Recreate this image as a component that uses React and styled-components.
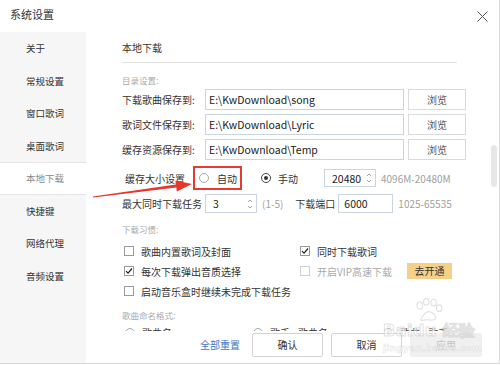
import React from "react";
import styled, { createGlobalStyle } from "styled-components";

const Global = createGlobalStyle`
  html, body { margin: 0; padding: 0; background: #fff; }
  body { font-family: "Noto Sans CJK SC", "Microsoft YaHei", sans-serif; color: #333; }
  * { box-sizing: border-box; }
`;

const Window = styled.div`
  position: relative;
  width: 500px;
  height: 364px;
  background: #fff;
  border-right: 1px solid #d8d8d8;
  border-bottom: 1px solid #d8d8d8;
  display: flex;
  flex-direction: column;
  overflow: hidden;
`;

const TitleBar = styled.div`
  height: 32px;
  display: flex;
  align-items: flex-start;
  justify-content: space-between;
  padding: 5px 11px 0 10px;
`;

const Title = styled.div`
  font-size: 11px;
  line-height: 18px;
  color: #333;
`;

const CloseBtn = styled.svg`
  width: 11px;
  height: 11px;
  margin-top: 6px;
`;

const Body = styled.div`
  flex: 1;
  display: flex;
  min-height: 0;
`;

const Sidebar = styled.div`
  width: 86px;
  background: #f6f6f6;
  display: flex;
  flex-direction: column;
`;

const NavItem = styled.div`
  height: 32.5px;
  padding-left: 26px;
  font-size: 9.5px;
  line-height: 30.5px;
  color: ${(p) => (p.$active ? "#8a8a8a" : "#333")};
  background: ${(p) => (p.$active ? "#fff" : "transparent")};
  border-top: 1px solid ${(p) => (p.$active ? "#e4e4e4" : "transparent")};
  border-bottom: 1px solid ${(p) => (p.$active ? "#e4e4e4" : "transparent")};
`;

const Main = styled.div`
  flex: 1;
  display: flex;
  flex-direction: column;
  min-width: 0;
`;

const ScrollRow = styled.div`
  height: 299px;
  display: flex;
  overflow: hidden;
`;

const Content = styled.div`
  flex: 1;
  min-width: 0;
  padding-left: 36px;
  display: flex;
  flex-direction: column;
`;

const ScrollTrack = styled.div`
  width: 8px;
  padding-top: 113px;
`;

const Thumb = styled.div`
  width: 6px;
  height: 42px;
  border-radius: 3px;
  background: #e7e7e7;
`;

const Heading = styled.div`
  width: 335px;
  height: 31px;
  padding-top: 2px;
  line-height: 28px;
  font-size: 10px;
  color: #333;
  border-bottom: 1px solid #e3e3e3;
`;

const SectionLabel = styled.div`
  margin-top: ${(p) => p.$mt}px;
  height: 16px;
  line-height: 16px;
  font-size: 8.5px;
  color: #aaa;
`;

const PathList = styled.div`
  margin-top: 1px;
  display: flex;
  flex-direction: column;
  gap: 4px;
`;

const Row = styled.div`
  display: flex;
  align-items: center;
  height: ${(p) => p.$h || 21}px;
  margin-top: ${(p) => p.$mt || 0}px;
`;

const Label = styled.div`
  width: ${(p) => p.$w}px;
  margin-left: ${(p) => p.$ml || 0}px;
  font-size: 10px;
  color: #333;
  white-space: nowrap;
  flex-shrink: 0;
`;

const PathInput = styled.div`
  width: 199px;
  height: 21px;
  border: 1px solid #c9d5e0;
  padding-left: 3px;
  font-size: 10.5px;
  line-height: 19px;
  color: #222;
`;

const BrowseButton = styled.div`
  width: 58px;
  height: 21px;
  margin-left: 4px;
  border: 1px solid #dadada;
  text-align: center;
  font-size: 10px;
  line-height: 19px;
  color: #555;
`;

const RedBox = styled.div`
  width: 49px;
  height: 24px;
  border: 2px solid #e53a33;
  display: flex;
  align-items: center;
  padding-left: 4px;
`;

const Radio = styled.span`
  width: 10px;
  height: 10px;
  border-radius: 50%;
  border: 1px solid ${(p) => (p.$on ? "#444" : "#a8a8a8")};
  display: inline-flex;
  align-items: center;
  justify-content: center;
  flex-shrink: 0;
  &::after {
    content: "";
    width: 4px;
    height: 4px;
    border-radius: 50%;
    background: ${(p) => (p.$on ? "#333" : "transparent")};
  }
`;

const OptText = styled.span`
  font-size: 10px;
  color: #333;
  margin-left: ${(p) => p.$gap || 7}px;
  white-space: nowrap;
`;

const Option = styled.div`
  display: flex;
  align-items: center;
  width: ${(p) => p.$w}px;
  margin-left: ${(p) => p.$ml || 0}px;
  flex-shrink: 0;
`;

const SpinBox = styled.div`
  width: ${(p) => p.$w}px;
  height: ${(p) => p.$h}px;
  border: 1px solid #c9d5e0;
  display: flex;
  align-items: center;
  justify-content: space-between;
  padding: 0 3px 0 ${(p) => p.$pl || 7}px;
  font-size: 10.5px;
  color: #222;
  flex-shrink: 0;
`;

const Hint = styled.span`
  margin-left: ${(p) => p.$ml || 5}px;
  font-size: 10px;
  color: #a0a0a0;
  white-space: nowrap;
`;

const CheckGrid = styled.div`
  margin-top: 4px;
  padding-left: 2px;
  display: grid;
  grid-template-columns: 176px auto;
  grid-auto-rows: 20px;
`;

const CheckItem = styled.div`
  display: flex;
  align-items: center;
  font-size: 10px;
  color: ${(p) => (p.$disabled ? "#aaa" : "#333")};
  white-space: nowrap;
  grid-column: ${(p) => p.$span || "auto"};
`;

const Box = styled.span`
  width: 10px;
  height: 10px;
  border: 1px solid ${(p) => (p.$disabled ? "#cfcfcf" : "#9a9a9a")};
  margin-right: 7px;
  display: inline-flex;
  align-items: center;
  justify-content: center;
  flex-shrink: 0;
`;

const VipButton = styled.div`
  margin-left: 15px;
  width: 45px;
  height: 16px;
  background: #f6d089;
  text-align: center;
  line-height: 16px;
  font-size: 10px;
  color: #333;
`;

const NameRow = styled.div`
  margin-top: 2px;
  display: flex;
  align-items: center;
  height: 20px;
  padding-left: 3px;
`;

const Footer = styled.div`
  height: 32px;
  display: flex;
  justify-content: flex-end;
  align-items: flex-start;
  padding: 2px 17px 0 0;
  gap: 8px;
`;

const ResetLink = styled.div`
  height: 24px;
  line-height: 24px;
  font-size: 10px;
  color: #3a78c8;
  margin-right: 4px;
`;

const FootButton = styled.div`
  width: ${(p) => p.$w || 71}px;
  height: 24px;
  line-height: 22px;
  text-align: center;
  font-size: 10px;
  border: 1px solid ${(p) => (p.$disabled ? "#f0f0f0" : "#d4d4d4")};
  border-radius: 2px;
  background: ${(p) => (p.$disabled ? "#f0f0f0" : "#fff")};
  color: ${(p) => (p.$disabled ? "#c0c0c0" : "#333")};
`;

const ArrowSvg = styled.svg`
  position: absolute;
  left: 0;
  top: 0;
  width: 500px;
  height: 365px;
  pointer-events: none;
`;

const Watermark = styled.div`
  position: absolute;
  left: 383px;
  top: 298px;
  width: 95px;
  pointer-events: none;
  display: flex;
  flex-direction: column;
  align-items: flex-start;
`;

const WmBig = styled.div`
  font-family: "DejaVu Sans", sans-serif;
  font-size: 16px;
  font-weight: bold;
  color: rgba(255, 255, 255, 0.55);
  -webkit-text-stroke: 1px rgba(195, 195, 195, 0.5);
  line-height: 18px;
  letter-spacing: 0.5px;
`;

const WmSmall = styled.div`
  font-family: "DejaVu Sans", sans-serif;
  font-size: 9.5px;
  font-weight: bold;
  color: rgba(255, 255, 255, 0.5);
  -webkit-text-stroke: 0.6px rgba(195, 195, 195, 0.45);
  line-height: 12px;
  margin-top: 2px;
`;

const Check = () => (
  <svg width="8" height="8" viewBox="0 0 8 8">
    <polyline points="1,4.2 3,6.2 7,1.5" fill="none" stroke="#222" strokeWidth="1.2" />
  </svg>
);

const Spin = () => (
  <svg width="6" height="12" viewBox="0 0 6 12">
    <polyline points="1,4 3,2 5,4" fill="none" stroke="#999" strokeWidth="0.9" />
    <polyline points="1,8 3,10 5,8" fill="none" stroke="#999" strokeWidth="0.9" />
  </svg>
);

const navItems = ["关于", "常规设置", "窗口歌词", "桌面歌词", "本地下载", "快捷键", "网络代理", "音频设置"];

const paths = [
  ["下载歌曲保存到:", "E:\\KwDownload\\song"],
  ["歌词文件保存到:", "E:\\KwDownload\\Lyric"],
  ["缓存资源保存到:", "E:\\KwDownload\\Temp"],
];

export default function App() {
  return (
    <>
      <Global />
      <Window>
        <TitleBar>
          <Title>系统设置</Title>
          <CloseBtn viewBox="0 0 11 11">
            <path d="M0.5 0.5 L10.5 10.5 M10.5 0.5 L0.5 10.5" stroke="#555" strokeWidth="1" />
          </CloseBtn>
        </TitleBar>
        <Body>
          <Sidebar>
            {navItems.map((n) => (
              <NavItem key={n} $active={n === "本地下载"}>{n}</NavItem>
            ))}
          </Sidebar>
          <Main>
            <ScrollRow>
              <Content>
                <Heading>本地下载</Heading>
                <SectionLabel $mt={9}>目录设置:</SectionLabel>
                <PathList>
                  {paths.map(([l, v]) => (
                    <Row key={l}>
                      <Label $w={83}>{l}</Label>
                      <PathInput>{v}</PathInput>
                      <BrowseButton>浏览</BrowseButton>
                    </Row>
                  ))}
                </PathList>
                <Row $h={24} $mt={6}>
                  <Label $w={68} $ml={3}>缓存大小设置</Label>
                  <RedBox>
                    <Radio />
                    <OptText $gap={8}>自动</OptText>
                  </RedBox>
                  <Option $w={63} $ml={19}>
                    <Radio $on />
                    <OptText>手动</OptText>
                  </Option>
                  <SpinBox $w={52} $h={18}>
                    <span>20480</span>
                    <Spin />
                  </SpinBox>
                  <Hint>4096M-20480M</Hint>
                </Row>
                <Row $h={20} $mt={4}>
                  <Label $w={83}>最大同时下载任务</Label>
                  <SpinBox $w={52} $h={19}>
                    <span>3</span>
                    <Spin />
                  </SpinBox>
                  <Hint>(1-5)</Hint>
                  <Label $w={43} $ml={12}>下载端口</Label>
                  <SpinBox $w={55} $h={19} $pl={5}>
                    <span>6000</span>
                  </SpinBox>
                  <Hint>1025-65535</Hint>
                </Row>
                <SectionLabel $mt={8}>下载习惯:</SectionLabel>
                <CheckGrid>
                  <CheckItem><Box />歌曲内置歌词及封面</CheckItem>
                  <CheckItem><Box><Check /></Box>同时下载歌词</CheckItem>
                  <CheckItem><Box><Check /></Box>每次下载弹出音质选择</CheckItem>
                  <CheckItem $disabled>
                    <Box $disabled />开启VIP高速下载
                    <VipButton>去开通</VipButton>
                  </CheckItem>
                  <CheckItem $span="1 / span 2"><Box />启动音乐盒时继续未完成下载任务</CheckItem>
                </CheckGrid>
                <SectionLabel $mt={6}>歌曲命名格式:</SectionLabel>
                <NameRow>
                  <Option $w={128}>
                    <Radio />
                    <OptText>歌曲名</OptText>
                  </Option>
                  <Option $w={130}>
                    <Radio />
                    <OptText>歌手 - 歌曲名</OptText>
                  </Option>
                  <Option $w={70}>
                    <Radio />
                    <OptText>歌曲 - 歌手</OptText>
                  </Option>
                </NameRow>
              </Content>
              <ScrollTrack>
                <Thumb />
              </ScrollTrack>
            </ScrollRow>
            <Footer>
              <ResetLink>全部重置</ResetLink>
              <FootButton>确认</FootButton>
              <FootButton>取消</FootButton>
              <FootButton $w={72} $disabled>应用</FootButton>
            </Footer>
          </Main>
        </Body>
        <Watermark>
          <svg width="40" height="24" viewBox="0 0 40 26" style={{ marginLeft: 26 }}>
            <g fill="none" stroke="rgba(195,195,195,0.5)" strokeWidth="1.2">
              <ellipse cx="10" cy="8" rx="3" ry="4" />
              <ellipse cx="17" cy="4" rx="3" ry="3.6" />
              <ellipse cx="25" cy="5" rx="3" ry="3.6" />
              <ellipse cx="31" cy="11" rx="3" ry="3.6" />
              <path d="M12 22 Q18 10 26 18 Q30 24 22 24 Q18 23 14 24 Q9 25 12 22 Z" />
            </g>
          </svg>
          <WmBig>Baidu 经验</WmBig>
          <WmSmall>jingyan.baidu.com</WmSmall>
        </Watermark>
        <ArrowSvg viewBox="0 0 500 365">
          <polygon
            points="92.9,196.5 175.9,184.6 175.4,180.6 192,184 176.8,191.5 176.3,187.6 93.1,197.5"
            fill="#e8362d"
          />
        </ArrowSvg>
      </Window>
    </>
  );
}
